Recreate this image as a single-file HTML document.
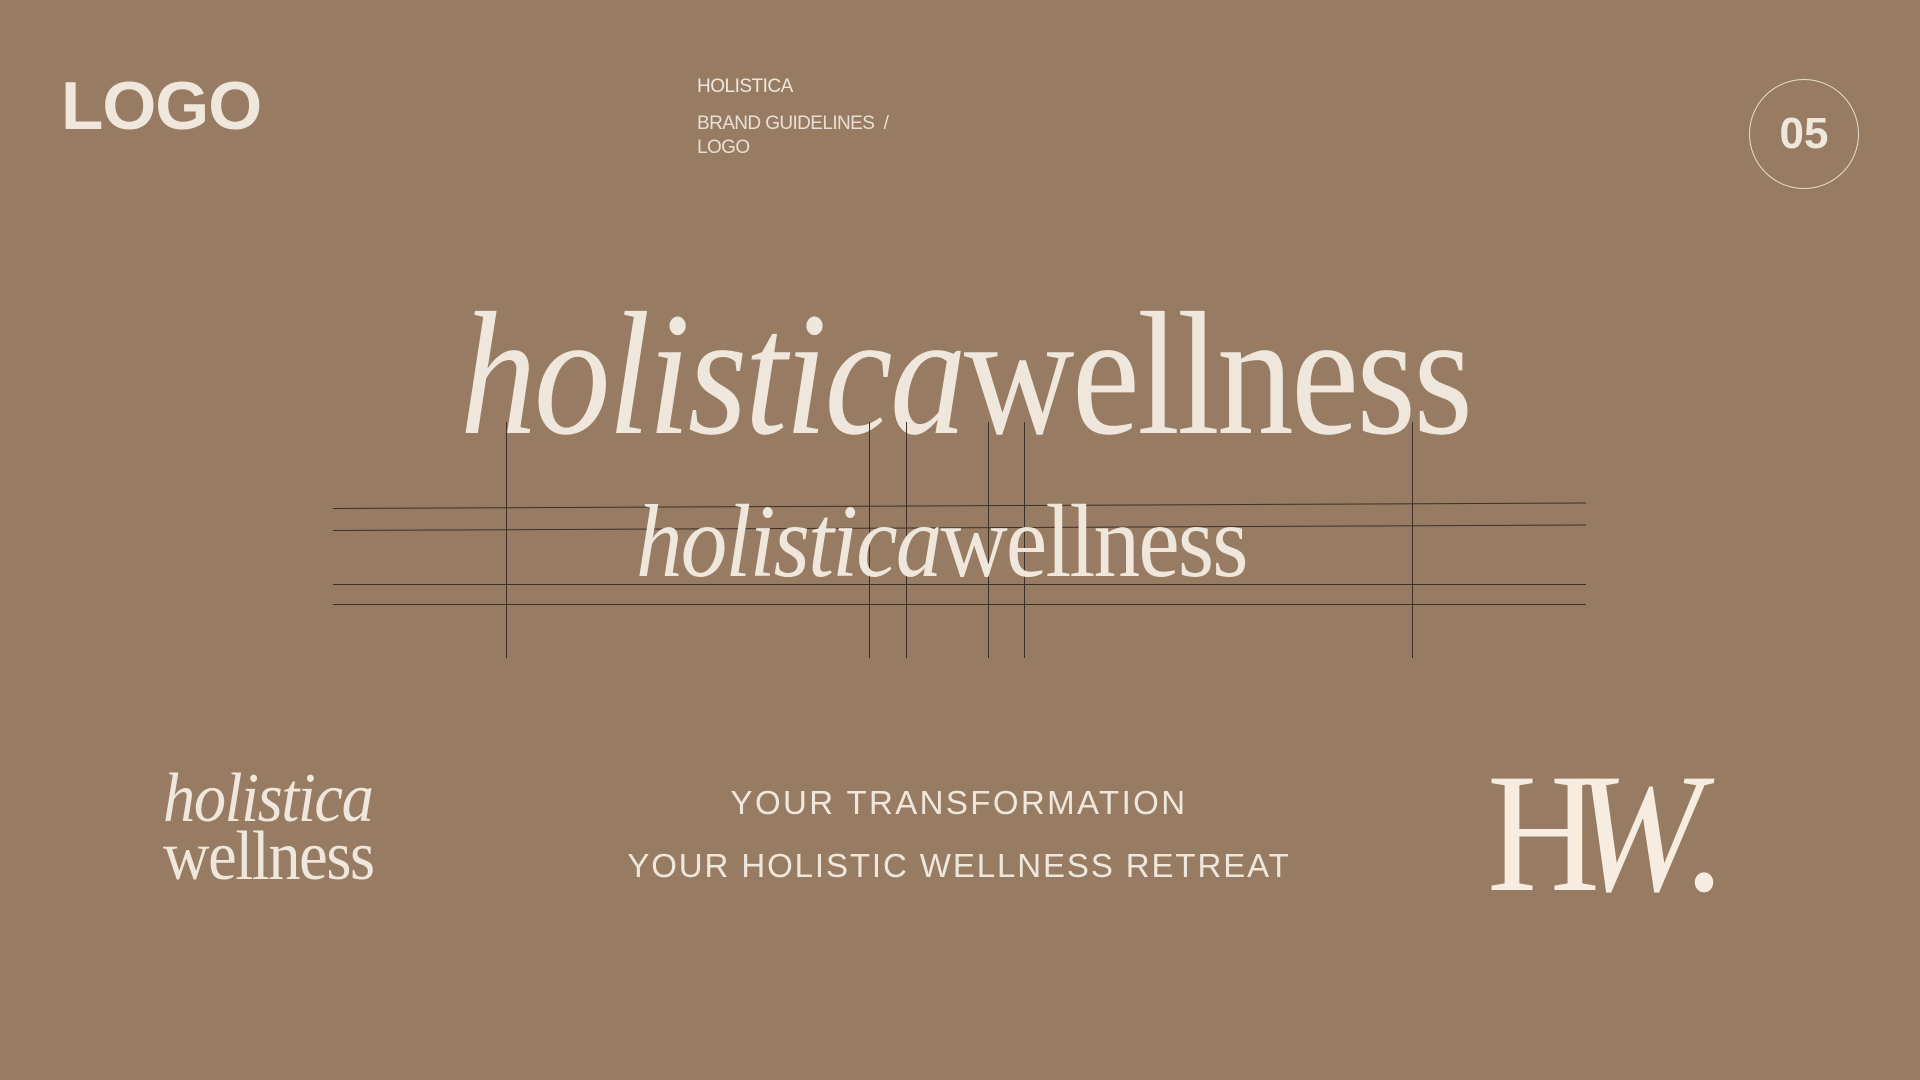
<!DOCTYPE html>
<html><head><meta charset="utf-8"><style>
html,body{margin:0;padding:0}
body{width:1920px;height:1080px;background:#977c63;position:relative;overflow:hidden;color:#f0e7dc;font-family:"Liberation Sans",sans-serif}
.a{position:absolute;white-space:nowrap}
.serif{font-family:"Liberation Serif",serif;line-height:1}
.hl{position:absolute;height:1px;background:#3d3026}
.vl{position:absolute;width:1px;background:#3d3026;top:422px;height:236px}
</style></head><body>
<div class="a" style="left:61px;top:72px;font-size:68px;line-height:1;letter-spacing:-1px;font-weight:bold;transform:scaleX(1.02);transform-origin:0 0">LOGO</div>
<div class="a" style="left:697px;top:77px;font-size:19px;line-height:1;letter-spacing:-0.5px">HOLISTICA</div>
<div class="a" style="left:697px;top:112px;font-size:19px;line-height:24px;letter-spacing:-0.6px;font-weight:300;opacity:.92">BRAND GUIDELINES &nbsp;/<br>LOGO</div>
<div class="a" style="left:1749px;top:79px;width:110px;height:110px;border:1px solid #e8dccd;border-radius:50%;box-sizing:border-box;text-align:center;line-height:108px;font-size:44px;font-weight:bold">05</div>

<div class="a serif" style="left:460px;top:287px;font-size:176px;transform:scaleX(0.87);transform-origin:0 0;letter-spacing:-3px"><i>holistica</i>wellness</div>

<div class="hl" style="left:333px;width:1253px;top:508px;transform:rotate(-0.25deg);transform-origin:0 0"></div>
<div class="hl" style="left:333px;width:1253px;top:530px;transform:rotate(-0.25deg);transform-origin:0 0"></div>
<div class="hl" style="left:333px;width:1253px;top:584px"></div>
<div class="hl" style="left:333px;width:1253px;top:604px"></div>
<div class="vl" style="left:506px"></div>
<div class="vl" style="left:869px"></div>
<div class="vl" style="left:906px"></div>
<div class="vl" style="left:988px"></div>
<div class="vl" style="left:1024px"></div>
<div class="vl" style="left:1412px"></div>

<div class="a serif" style="left:636px;top:490px;font-size:104px;transform:scaleX(0.895);transform-origin:0 0;letter-spacing:-2px"><i>holistica</i>wellness</div>

<div class="a serif" style="left:163px;top:770px;font-size:70px;line-height:58px;transform:scaleX(0.92);transform-origin:0 0;letter-spacing:-1.5px"><i>holistica</i><br>wellness</div>

<div class="a" style="left:0;width:1918px;text-align:center;top:786px;font-size:33px;line-height:1;letter-spacing:2.4px;font-weight:300">YOUR TRANSFORMATION</div>
<div class="a" style="left:0;width:1918px;text-align:center;top:849px;font-size:33px;line-height:1;letter-spacing:1.9px;font-weight:300">YOUR HOLISTIC WELLNESS RETREAT</div>

<div class="a serif" style="left:1487px;top:748px;font-size:170px;transform:scaleX(0.92);transform-origin:0 0;color:#f6ece0">H<i style="margin-left:-30px">W.</i></div>
</body></html>
